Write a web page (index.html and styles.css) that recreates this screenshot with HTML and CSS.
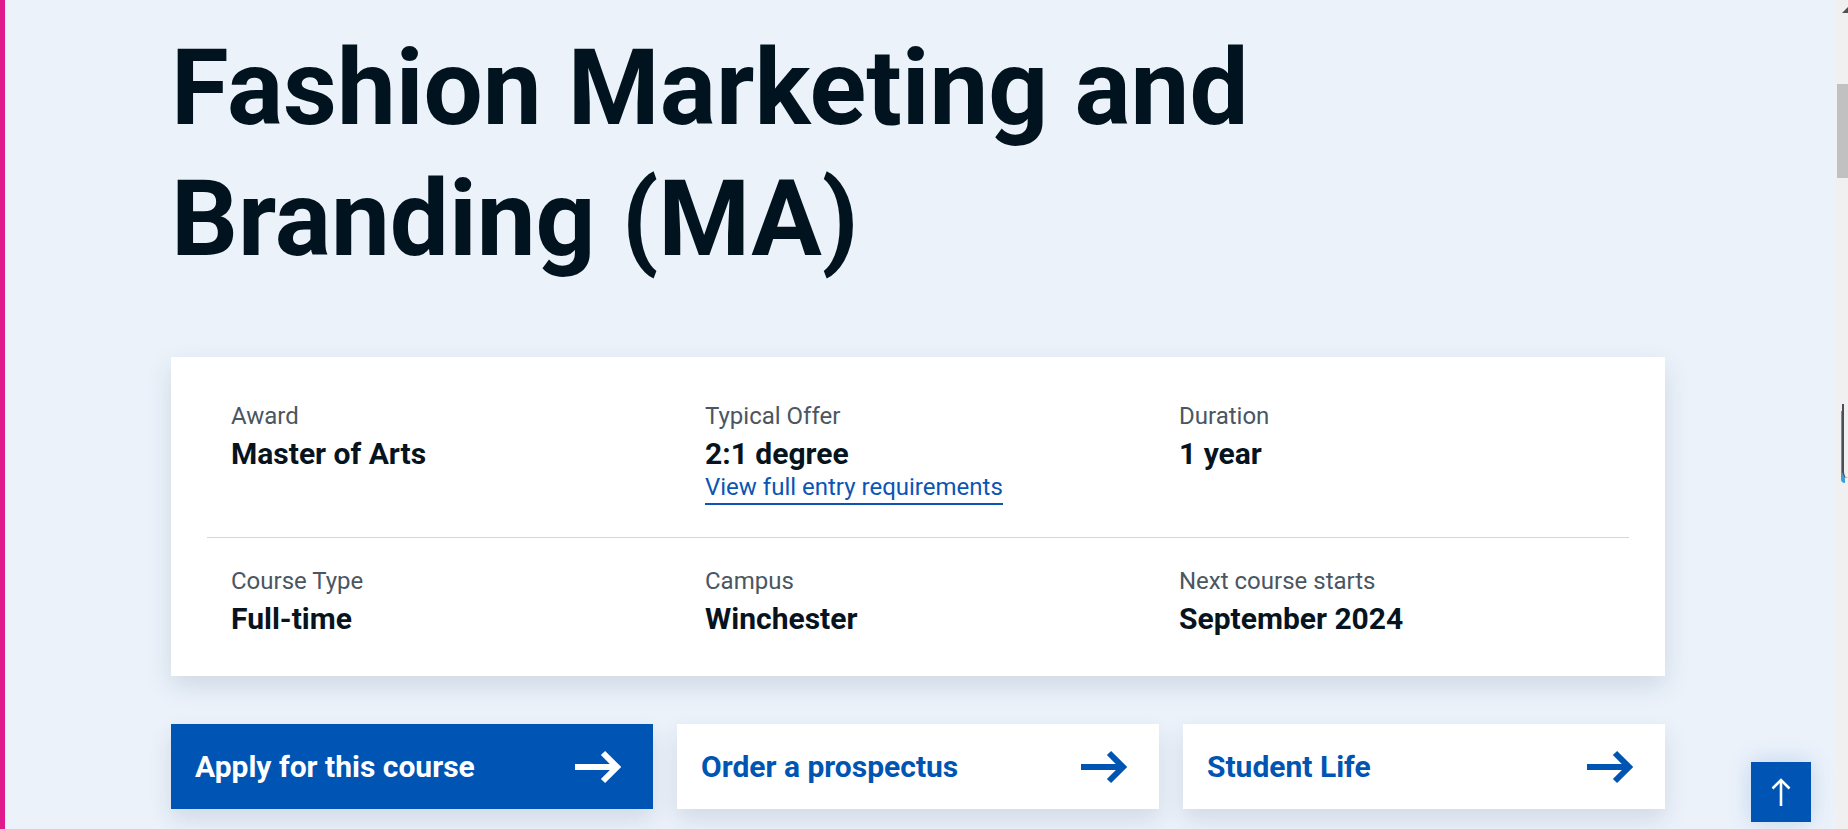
FILE: index.html
```html
<!DOCTYPE html>
<html lang="en">
<head>
<meta charset="utf-8">
<title>Fashion Marketing and Branding (MA)</title>
<link rel="stylesheet" href="styles.css">
</head>
<body>
<div class="page">
  <main class="container">
    <h1 class="title">Fashion Marketing and Branding (MA)</h1>

    <section class="facts">
      <div class="facts-row facts-row--first">
        <div class="fact">
          <div class="fact-label">Award</div>
          <div class="fact-value">Master of Arts</div>
        </div>
        <div class="fact">
          <div class="fact-label">Typical Offer</div>
          <div class="fact-value">2:1 degree</div>
          <a class="fact-link" href="#">View full entry requirements</a>
        </div>
        <div class="fact">
          <div class="fact-label">Duration</div>
          <div class="fact-value">1 year</div>
        </div>
      </div>
      <div class="facts-row facts-row--second">
        <div class="fact">
          <div class="fact-label">Course Type</div>
          <div class="fact-value">Full-time</div>
        </div>
        <div class="fact">
          <div class="fact-label">Campus</div>
          <div class="fact-value">Winchester</div>
        </div>
        <div class="fact">
          <div class="fact-label">Next course starts</div>
          <div class="fact-value">September 2024</div>
        </div>
      </div>
    </section>

    <nav class="actions">
      <a class="action action--primary" href="#">
        <span>Apply for this course</span>
        <svg class="action-arrow" viewBox="0 0 48 34" width="48" height="34" aria-hidden="true"><path d="M0 17H41" /><path d="M28 3L42 17L28 31" /></svg>
      </a>
      <a class="action" href="#">
        <span>Order a prospectus</span>
        <svg class="action-arrow" viewBox="0 0 48 34" width="48" height="34" aria-hidden="true"><path d="M0 17H41" /><path d="M28 3L42 17L28 31" /></svg>
      </a>
      <a class="action" href="#">
        <span>Student Life</span>
        <svg class="action-arrow" viewBox="0 0 48 34" width="48" height="34" aria-hidden="true"><path d="M0 17H41" /><path d="M28 3L42 17L28 31" /></svg>
      </a>
    </nav>
  </main>
</div>

<a class="to-top" href="#" aria-label="Back to top">
  <svg viewBox="0 0 60 60" width="60" height="60" aria-hidden="true"><path d="M30 44V18" /><path d="M21.5 26.5L30 18L38.5 26.5" /></svg>
</a>

<div class="scrollbar" aria-hidden="true">
  <div class="scrollbar-arrow"></div>
  <div class="scrollbar-thumb"></div>
</div>
<div class="edge-widget" aria-hidden="true"></div>
</body>
</html>
```

FILE: styles.css
```css
html, body {
  margin: 0;
  padding: 0;
}

body {
  background: #ebf2fa linear-gradient(to right, #e0198c 0, #e0198c 5px, transparent 5px) no-repeat;
  font-family: Roboto, "Liberation Sans", Arial, sans-serif;
  color: #02131f;
  height: 829px;
  overflow: hidden;
}

.page {
  margin-right: 12px;
}

.container {
  width: 1494px;
  margin: 0 auto;
}

.title {
  margin: 0;
  padding-top: 23px;
  font-size: 105px;
  line-height: 131px;
  font-weight: 700;
  color: #01131e;
  max-width: 1200px;
}

.facts {
  margin-top: 72px;
  background: #fff;
  padding: 18px 36px;
  box-shadow: 0 10px 24px rgba(25, 45, 85, 0.13);
}

.facts-row {
  display: grid;
  grid-template-columns: repeat(3, 1fr);
}

.facts-row--first {
  padding: 24px 0 32px;
  border-bottom: 1px solid #cdd7e3;
}

.facts-row--second {
  padding: 26px 0 21px;
}

.fact {
  padding: 0 24px;
}

.fact-label {
  font-size: 24px;
  line-height: 34px;
  color: #4a5661;
}

.fact-value {
  margin-top: 3px;
  font-size: 30px;
  line-height: 36px;
  font-weight: 700;
  color: #07141e;
}

.fact-link {
  display: inline-block;
  margin-top: 1px;
  padding-bottom: 2px;
  font-size: 24px;
  line-height: 28px;
  color: #0b55b4;
  text-decoration: none;
  border-bottom: 2px solid #0b55b4;
}

.actions {
  display: grid;
  grid-template-columns: repeat(3, 1fr);
  gap: 24px;
  margin-top: 48px;
}

.action {
  display: flex;
  align-items: center;
  justify-content: space-between;
  height: 85px;
  padding: 0 30px 0 24px;
  background: #fff;
  color: #0055b3;
  font-size: 30px;
  font-weight: 700;
  text-decoration: none;
  box-shadow: 0 10px 22px rgba(25, 45, 85, 0.12);
}

.action--primary {
  background: #0054b3;
  color: #fff;
}

.action-arrow {
  fill: none;
  stroke: currentColor;
  stroke-width: 6;
  stroke-linejoin: miter;
}

.to-top {
  position: fixed;
  right: 37px;
  bottom: 7px;
  width: 60px;
  height: 60px;
  background: #0054b3;
  box-shadow: 0 0 24px rgba(0, 84, 179, 0.18);
  color: #fff;
  display: block;
}

.to-top svg {
  display: block;
  fill: none;
  stroke: currentColor;
  stroke-width: 2.6;
}

.scrollbar {
  position: fixed;
  top: 0;
  right: 0;
  width: 12px;
  height: 100%;
  background: #f0f0f0;
}

.scrollbar-arrow {
  position: absolute;
  top: 7px;
  right: 0;
  width: 0;
  height: 0;
  border-left: 6px solid transparent;
  border-bottom: 6px solid #505050;
}

.scrollbar-thumb {
  position: absolute;
  top: 84px;
  left: 1px;
  right: 0;
  height: 94px;
  background: #c1c1c1;
}

.edge-widget {
  position: fixed;
  right: 0;
  top: 404px;
  width: 4px;
  height: 74px;
  border-left: 2px solid #4a4f55;
  border-bottom-left-radius: 6px;
  box-shadow: -2px 6px 0 -1px #3ba0d8;
}
```
